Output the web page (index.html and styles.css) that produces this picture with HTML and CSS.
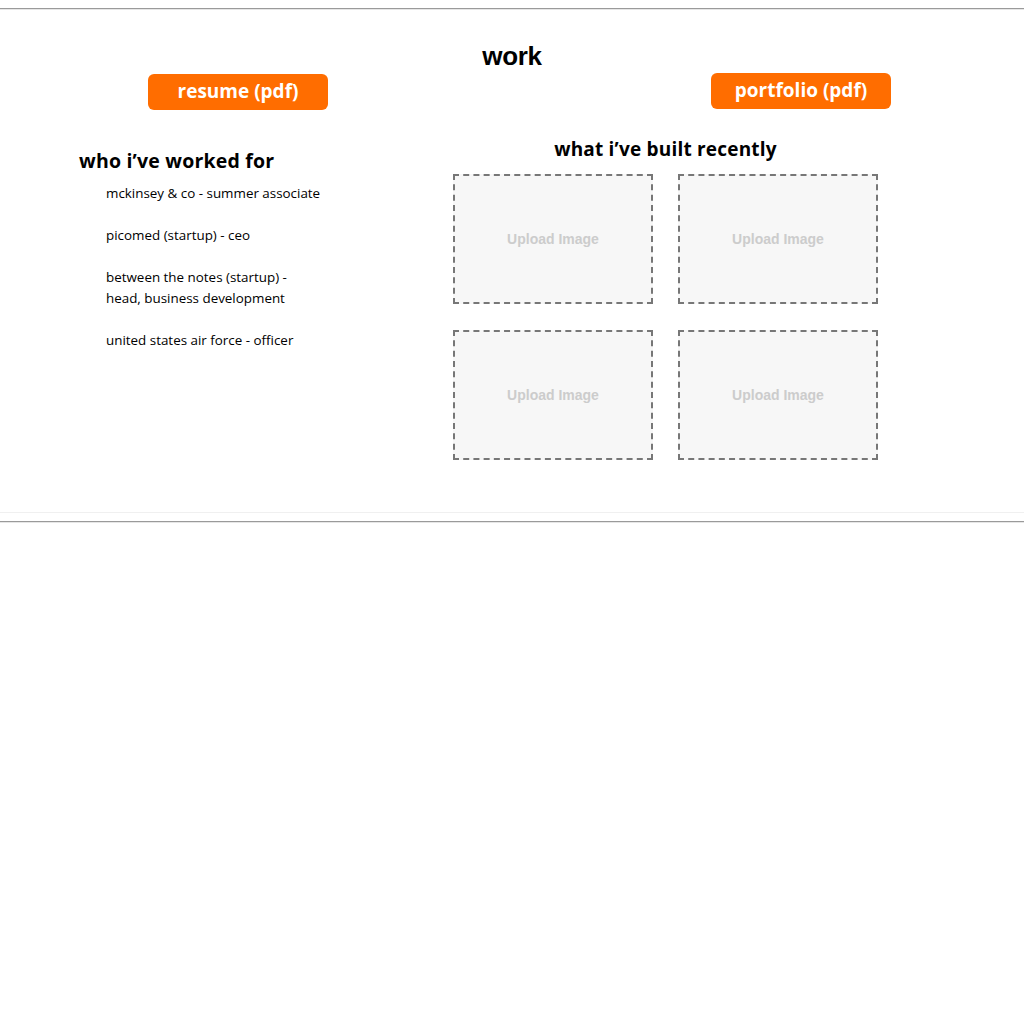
FILE: index.html
```html
<!DOCTYPE html>
<html lang="en">
<head>
    <meta charset="UTF-8">
    <title>work</title>
    <link rel="stylesheet" href="styles.css">
</head>
<body>
    <hr class="rule">
    <section class="work">
        <h1 class="work-title">work</h1>
        <div class="doc-links">
            <a class="doc-button resume-button" href="#">resume (pdf)</a>
            <a class="doc-button portfolio-button" href="#">portfolio (pdf)</a>
        </div>
        <div class="work-body">
            <div class="employers">
                <h2>who i’ve worked for</h2>
                <ul class="employer-list">
                    <li>mckinsey &amp; co - summer associate</li>
                    <li>picomed (startup) - ceo</li>
                    <li>between the notes (startup) -<br>head, business development</li>
                    <li>united states air force - officer</li>
                </ul>
            </div>
            <div class="projects">
                <h2>what i’ve built recently</h2>
                <div class="project-grid">
                    <div class="upload-box">Upload Image</div>
                    <div class="upload-box">Upload Image</div>
                    <div class="upload-box">Upload Image</div>
                    <div class="upload-box">Upload Image</div>
                </div>
            </div>
        </div>
    </section>
    <hr class="rule">
</body>
</html>
```
FILE: styles.css
```css
body {
    margin: 8px 0;
    background: #ffffff;
    font-family: 'Open Sans', sans-serif;
    color: #000;
}
.rule {
    margin: 0;
    border: none;
    border-top: 1px solid #9a9a9a;
    border-bottom: 1px solid #e6e6e6;
}
.work {
    height: 502px;
    margin-bottom: 8px;
    border-bottom: 1px solid #f0f0f0;
}
.work-title {
    margin: 0;
    padding-top: 30px;
    text-align: center;
    font-family: 'Liberation Sans', Arial, sans-serif;
    font-size: 26px;
    font-weight: 700;
    letter-spacing: -0.3px;
    line-height: 33px;
}
.doc-links {
    display: flex;
    justify-content: space-between;
    align-items: flex-start;
    padding: 0 133px 0 148px;
}
.doc-button {
    display: block;
    width: 180px;
    height: 36px;
    line-height: 35px;
    background-color: #ff6d00;
    color: #ffffff;
    border-radius: 6px;
    text-align: center;
    text-decoration: none;
    font-size: 19px;
    font-weight: 700;
}
.resume-button {
    margin-top: 1px;
}
.work-body {
    display: flex;
    padding-top: 26px;
}
.work-body h2 {
    margin: 0;
    font-size: 19px;
    font-weight: 700;
    line-height: 26px;
    letter-spacing: 0.2px;
}
.employers {
    width: 374px;
    padding-left: 79px;
    padding-top: 12px;
}
.employers h2 {
    font-size: 19.5px;
}
.employer-list {
    list-style: none;
    margin: 9px 0 0;
    padding-left: 27px;
    font-size: 13.4px;
    line-height: 21px;
}
.employer-list li {
    margin-bottom: 21px;
}
.projects {
    width: 425px;
    text-align: center;
}
.project-grid {
    display: grid;
    grid-template-columns: 200px 200px;
    gap: 26px 25px;
    margin-top: 12px;
}
.upload-box {
    height: 130px;
    box-sizing: border-box;
    border: 2px dashed #777777;
    background: #f7f7f7;
    color: #cccccc;
    font-family: 'Liberation Sans', Arial, sans-serif;
    font-size: 14px;
    font-weight: 700;
    display: flex;
    align-items: center;
    justify-content: center;
}
```
